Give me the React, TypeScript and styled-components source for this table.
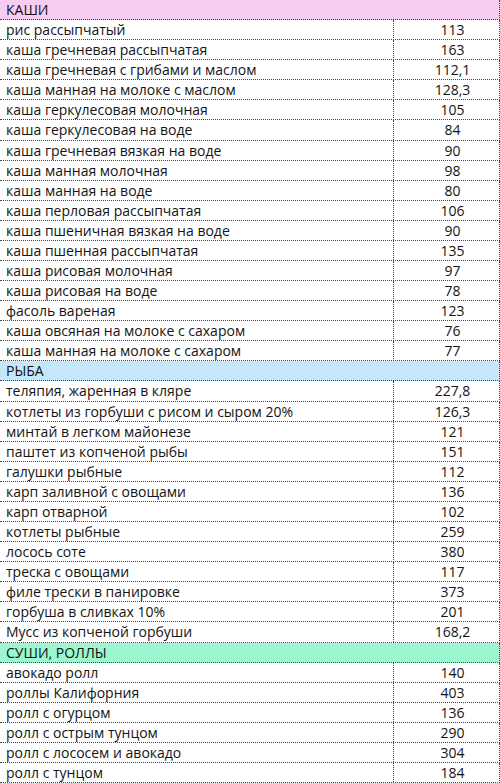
import styled, { createGlobalStyle } from "styled-components";

const GlobalStyle = createGlobalStyle`
  html, body {
    margin: 0;
    padding: 0;
    background: #ffffff;
  }
  body {
    font-family: "Open Sans", "Liberation Sans", sans-serif;
  }
`;

type Item = [string, string];
type Section = { title: string; color: string; items: Item[] };

const sections: Section[] = [
  {
    title: "КАШИ",
    color: "#f7ccf3",
    items: [
      ["рис рассыпчатый", "113"],
      ["каша гречневая рассыпчатая", "163"],
      ["каша гречневая с грибами и маслом", "112,1"],
      ["каша манная на молоке с маслом", "128,3"],
      ["каша геркулесовая молочная", "105"],
      ["каша геркулесовая на воде", "84"],
      ["каша гречневая вязкая на воде", "90"],
      ["каша манная молочная", "98"],
      ["каша манная на воде", "80"],
      ["каша перловая рассыпчатая", "106"],
      ["каша пшеничная вязкая на воде", "90"],
      ["каша пшенная рассыпчатая", "135"],
      ["каша рисовая молочная", "97"],
      ["каша рисовая на воде", "78"],
      ["фасоль вареная", "123"],
      ["каша овсяная на молоке с сахаром", "76"],
      ["каша манная на молоке с сахаром", "77"],
    ],
  },
  {
    title: "РЫБА",
    color: "#c6e6fa",
    items: [
      ["теляпия, жаренная в кляре", "227,8"],
      ["котлеты из горбуши с рисом и сыром 20%", "126,3"],
      ["минтай в легком майонезе", "121"],
      ["паштет из копченой рыбы", "151"],
      ["галушки рыбные", "112"],
      ["карп заливной с овощами", "136"],
      ["карп отварной", "102"],
      ["котлеты рыбные", "259"],
      ["лосось соте", "380"],
      ["треска с овощами", "117"],
      ["филе трески в панировке", "373"],
      ["горбуша в сливках 10%", "201"],
      ["Мусс из копченой горбуши", "168,2"],
    ],
  },
  {
    title: "СУШИ, РОЛЛЫ",
    color: "#9cf6cf",
    items: [
      ["авокадо ролл", "140"],
      ["роллы Калифорния", "403"],
      ["ролл с огурцом", "136"],
      ["ролл с острым тунцом", "290"],
      ["ролл с лососем и авокадо", "304"],
      ["ролл с тунцом", "184"],
    ],
  },
];

export default function App() {
  return (
    <>
      <GlobalStyle />
      <Sheet>
        {sections.map((section) => (
          <div key={section.title}>
            <HeaderRow $bg={section.color}>{section.title}</HeaderRow>
            {section.items.map(([name, value]) => (
              <Row key={name}>
                <NameCell>{name}</NameCell>
                <ValueCell>{value}</ValueCell>
              </Row>
            ))}
          </div>
        ))}
      </Sheet>
    </>
  );
}

const Sheet = styled.div`
  width: 500px;
  display: flex;
  flex-direction: column;
  color: #141414;
  font-size: 14px;
`;

const HeaderRow = styled.div<{ $bg: string }>`
  height: 19.08px;
  line-height: 19px;
  padding-left: 6px;
  background: ${(p) => p.$bg};
  border-bottom: 1px dotted #444;
  border-right: 1px dotted #444;
  color: #111;
`;

const Row = styled.div`
  display: grid;
  grid-template-columns: 394px 1fr;
  height: 19.08px;
  line-height: 19.5px;
  border-bottom: 1px dotted #444;
  border-right: 1px dotted #444;
`;

const NameCell = styled.div`
  padding-left: 6px;
  white-space: nowrap;
  overflow: hidden;
  border-right: 1px dotted #444;
`;

const ValueCell = styled.div`
  text-align: center;
  padding-left: 12px;
`;
